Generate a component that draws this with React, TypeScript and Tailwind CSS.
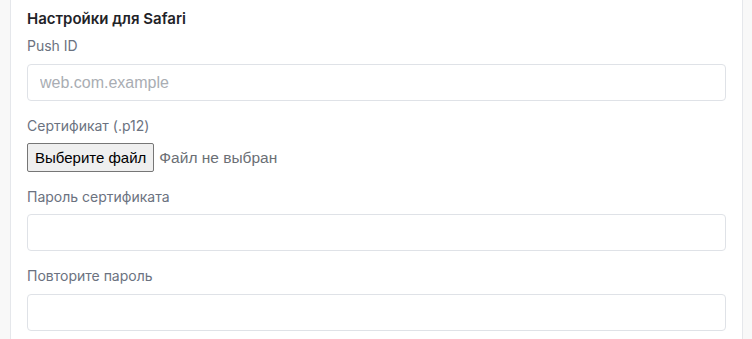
export default function App() {
  return (
    <div className="flex h-[339px] w-[752px] overflow-hidden bg-[#f8f9fa] font-['Inter',sans-serif]">
      <div className="w-[11px] shrink-0 border-r border-[#e5e7eb] bg-[#f8f8f8]" />
      <div className="flex-1 bg-white px-[16px] pt-[9px]">
        <h2 className="text-[15px] font-semibold leading-[20px] text-[#1f2328]">
          Настройки для Safari
        </h2>
        <div className="mt-[7px] text-[14px] leading-[20px] text-[#6b7280]">Push ID</div>
        <input
          type="text"
          placeholder="web.com.example"
          className="mt-[8px] block h-[37px] w-full rounded-[4px] border border-[#dfe2e7] px-[12px] font-['Liberation_Sans',Arial,sans-serif] text-[16px] text-[#374151] outline-none placeholder:text-[#a9adb3]"
        />
        <div className="mt-[15px] text-[14px] leading-[20px] text-[#6b7280]">Сертификат (.p12)</div>
        <div className="mt-[7px] flex items-center font-['Liberation_Sans',Arial,sans-serif] text-[15px]">
          <button
            type="button"
            className="h-[29px] rounded-[2px] border border-[#767676] bg-[#efefef] px-[7px] text-[15px] leading-none text-black"
          >
            Выберите файл
          </button>
          <span className="ml-[5px] text-[15.5px] text-[#6b6f75]">Файл не выбран</span>
        </div>
        <div className="mt-[15px] text-[14px] leading-[20px] text-[#6b7280]">Пароль сертификата</div>
        <input
          type="password"
          className="mt-[7px] block h-[37px] w-full rounded-[4px] border border-[#dfe2e7] px-[12px] outline-none"
        />
        <div className="mt-[15px] text-[14px] leading-[20px] text-[#6b7280]">Повторите пароль</div>
        <input
          type="password"
          className="mt-[8px] block h-[37px] w-full rounded-[4px] border border-[#dfe2e7] px-[12px] outline-none"
        />
      </div>
      <div className="w-[10px] shrink-0 border-l border-[#e5e7eb] bg-[#f8f8f8]" />
    </div>
  );
}
